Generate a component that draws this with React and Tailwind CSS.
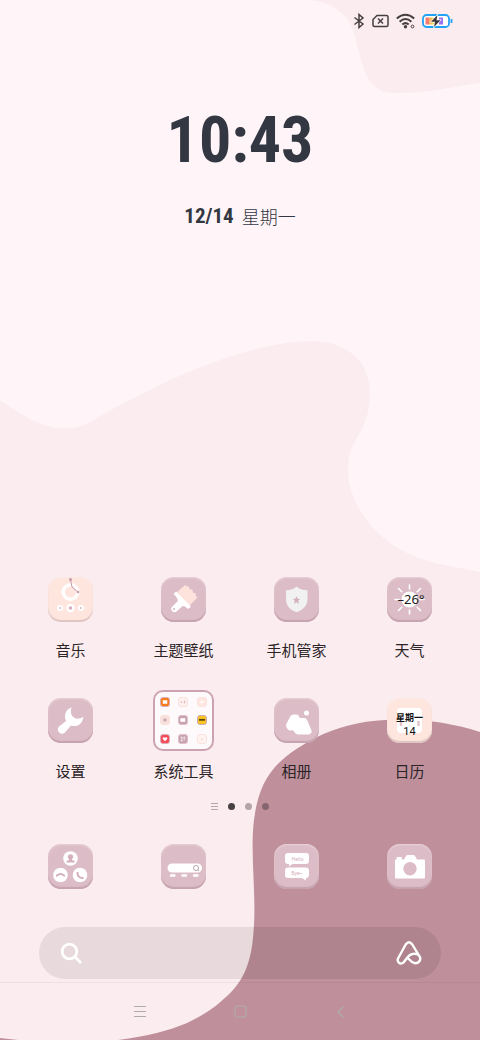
import React from "react";
import clsx from "clsx";

const Wallpaper = () => (
  <svg
    className="absolute inset-0 h-full w-full"
    viewBox="0 0 480 1040"
    preserveAspectRatio="none"
    aria-hidden="true"
  >
    <rect width="480" height="1040" fill="#fff5f8" />
    <path d="M310 0C334 3 346 14 352 27C362 57 362 93 394 93C425 94 450 87 480 83V0Z" fill="#fbecef" />
    <path
      d="M0 400C25 418 45 428.500 65 428.500C80 428.500 88 423 100 416C170 377 250 341 314 341C346 342 370 360 370 394C369 436 348 436 348 470C348 500 370 534 405 552C430 565 460 567 480 572V1040H0Z"
      fill="#fbecef"
    />
    <path
      d="M480 732C450 722 415 718 385 720C360 721 335 728 317 737C298 747 285 756 275 767C262 782 257 798 254 820C250 850 256 892 254 925C253 940 252 950 249 960C246 971 241 981 233 990C220 1004 206 1014 187 1023C168 1031 148 1036 118 1040H480Z"
      fill="#bf909c"
    />
    <path d="M0 1038L18 1040H0Z" fill="#bf909c" />
  </svg>
);

const StatusBar = () => (
  <div className="flex h-[42px] items-center justify-end gap-[7px] pr-[27px] text-[#463f42]">
    <svg width="12" height="16" viewBox="0 0 12 16" fill="none" stroke="currentColor" strokeWidth="1.5">
      <path d="M1.500 4.500L10 11L6 14.500V1.500L10 5L1.500 11.500" />
    </svg>
    <svg width="17" height="14" viewBox="0 0 17 14" fill="none" stroke="currentColor" strokeWidth="1.500">
      <path d="M5 1.500H14.500Q16 1.500 16 3V11Q16 12.500 14.500 12.500H2.500Q1 12.500 1 11V5.500Z" />
      <path d="M6 4.500L11 9.500M11 4.500L6 9.500" />
    </svg>
    <svg width="19" height="16" viewBox="0 0 19 16" fill="none" stroke="currentColor" strokeWidth="2">
      <path d="M.8 5.500Q9.500-2 18.200 5.500M3.600 8.700Q9.500 3.400 15.400 8.700M6.300 11.500Q9.500 8.800 12.700 11.500" />
      <circle cx="9.500" cy="13.700" r="1.700" fill="currentColor" stroke="none" />
      <circle cx="16.500" cy="13.500" r="1.400" strokeWidth="1" />
    </svg>
    <svg width="31" height="16" viewBox="0 0 31 16">
      <rect x="1" y="2" width="26" height="12" rx="3.500" fill="#fff" stroke="#22a2f5" strokeWidth="1.800" />
      <path d="M29.500 6V10" stroke="#22a2f5" strokeWidth="1.800" />
      <rect x="3.500" y="4.500" width="3.500" height="7" fill="#f77b72" />
      <rect x="7" y="4.500" width="3" height="7" fill="#fbb45f" />
      <rect x="10" y="4.500" width="4" height="7" fill="#f3dc62" />
      <rect x="17" y="4.500" width="4" height="7" fill="#9b70ed" />
      <path
        d="M15.500 2L9 8.800H13L12 14L18.500 7.200H14.500Z"
        fill="#3d373b"
        stroke="#fff"
        strokeWidth="1.200"
        paintOrder="stroke"
      />
    </svg>
  </div>
);

const MusicArt = () => (
  <>
    <circle cx="22.500" cy="15" r="7.300" fill="none" stroke="#fff" strokeWidth="3.400" />
    <g fill="#c69aac">
      <circle cx="22.500" cy="2.500" r="1.500" />
      <circle cx="30" cy="15" r="1.300" />
    </g>
    <path d="M22.500 2.500L24 10L30 15" fill="none" stroke="#c69aac" strokeWidth="1" />
    <g fill="#fff">
      <circle cx="12" cy="31" r="3" />
      <circle cx="22.500" cy="31" r="4.200" />
      <circle cx="33" cy="31" r="3" />
    </g>
    <path d="M13 29.700V32.300L10.800 31ZM32 29.700V32.300L34.200 31ZM21 29.500H24V32.500H21Z" fill="#d5b2be" />
  </>
);

const BrushArt = () => (
  <>
    <path d="M15 16L24 8L26 9.500L27.500 9.300L28.500 12L31.500 12.800L32 15.500L35 16.500L34.500 18.500L36.500 20.500L28 29Z" fill="#fde3dc" />
    <path
      fillRule="evenodd"
      d="M15 14.500L30 29.500L27 32Q23 28 21 29.500L15.500 34.500A3.300 3.300 0 0 1 10.800 30L16.500 24.500Q18 22 12.500 17ZM13 31A1.100 1.100 0 1 0 13 33.200A1.100 1.100 0 0 0 13 31Z"
      fill="#fff"
    />
  </>
);

const ShieldArt = () => (
  <>
    <path
      d="M22.500 9.500Q27 13.500 33.500 13.300V22C33.500 29 28.500 33 22.500 35.300C16.500 33 12 29 12 22V13.300Q18 13.500 22.500 9.500Z"
      fill="#f1f1f2"
    />
    <path
      d="M22.500 19L23.700 21.700L26.300 21.900L24.300 23.800L25 26.700L22.500 25.200L20 26.700L20.700 23.800L18.700 21.900L21.300 21.700Z"
      fill="#d7b1bd"
    />
  </>
);

const WeatherArt = () => (
  <>
    <circle cx="22.500" cy="22.500" r="8" fill="#fff" />
    <path
      d="M22.500 8V12M22.500 33V37M8 22.500H12M33 22.500H37M11.500 11.500L14.800 14.800M30.200 30.200L33.500 33.500M11.500 33.500L14.800 30.200M30.200 14.800L33.500 11.500"
      stroke="#fff"
      strokeWidth="1.600"
      strokeLinecap="round"
    />
    <text x="24" y="27" textAnchor="middle" fontSize="13" fill="#222" className="font-['Noto_Sans',sans-serif]">
      –26°
    </text>
  </>
);

const WrenchArt = () => (
  <path
    d="M23.500 9.500C18 11 15.500 17 18 23L11 28.500A4.300 4.300 0 0 0 16.500 35L23 27.500C29 29.500 35 26 35.300 18.500C32.500 21 28.500 21.500 26 19.500C22.500 17 22.500 13 23.500 9.500Z"
    fill="#fff"
  />
);

const PhotosArt = () => (
  <>
    <g fill="#fff" stroke="#fff" strokeWidth="7" strokeLinejoin="round">
      <path d="M19.500 20L22 20L25 28L16.500 29L15.500 27.500Z" />
      <path d="M26 23.500L30 23.500L34 33H24L21 29Z" />
    </g>
    <circle cx="32.500" cy="15" r="2.500" fill="#fff" />
  </>
);

const CalendarArt = () => (
  <>
    <rect x="10" y="10" width="25" height="25" rx="4" fill="#fff" />
    <path d="M14 23V28M31.500 23V28" stroke="#e5c3cb" strokeWidth="2.500" />
    <text
      x="22.500"
      y="23"
      textAnchor="middle"
      fontSize="9"
      fontWeight="700"
      fill="#111"
      className="font-['Noto_Sans_CJK_SC',sans-serif]"
    >
      星期一
    </text>
    <text x="22.500" y="37" textAnchor="middle" fontSize="11" fill="#111" className="font-['Roboto',sans-serif]">
      14
    </text>
  </>
);

const PhoneArt = () => (
  <>
    <g fill="#fff">
      <circle cx="22.500" cy="14.500" r="7.300" />
      <circle cx="12.500" cy="31" r="7.300" />
      <circle cx="32" cy="31" r="7.300" />
    </g>
    <path
      d="M22.500 10.300A2.600 2.600 0 0 0 21 15.100V16L18.500 17V18.500H26.500V17L24 16V15.100A2.600 2.600 0 0 0 22.500 10.300Z"
      fill="#d5b0bc"
    />
    <path d="M9 32.500V31.500Q12.500 28.500 16 31.500V32.500M29.500 28V29.500Q30 33.500 34 34H35.500" fill="none" stroke="#d5b0bc" strokeWidth="2" />
  </>
);

const BrowserArt = () => (
  <>
    <rect x="6.500" y="19.500" width="34.500" height="9" rx="4.500" fill="#fff" />
    <circle cx="35" cy="24" r="2.500" fill="none" stroke="#b9a4ab" strokeWidth="1" />
    <path d="M37 26L38 27" stroke="#b9a4ab" strokeWidth="1" />
    <path d="M10 31.500H13.500M21.500 31.500H25M33 31.500H36.500" stroke="#fff" strokeWidth="2.400" strokeLinecap="round" />
  </>
);

const MessagesArt = () => (
  <>
    <path
      d="M14 9H32Q35 9 35 12V17Q35 20 32 20H18.500L15 22.500V20H14Q11 20 11 17V12Q11 9 14 9ZM14 23.500H32Q35 23.500 35 26.500V31Q35 34 32 34V36.500L28 34H14Q11 34 11 31V26.500Q11 23.500 14 23.500Z"
      fill="#fff"
    />
    <g fill="#d3aab7" fontSize="5" textAnchor="middle" className="font-['Noto_Sans',sans-serif]">
      <text x="23.500" y="16.500">Hello</text>
      <text x="23" y="30.500">Bye~</text>
    </g>
  </>
);

const CameraArt = () => (
  <path
    fillRule="evenodd"
    d="M9.500 15.500V14Q9.500 13 10.500 13H14Q15 13 15 14V15.500H17L19 12Q19.500 11 21 11H26Q27.500 11 28 12L30 15.500H37Q38 15.500 38 16.500V33.500Q38 34.500 37 34.500H9Q8 34.500 8 33.500V16.500Q8 15.500 9 15.500ZM23 18A6.700 6.700 0 1 0 23 31.400A6.700 6.700 0 0 0 23 18Z"
    fill="#fff"
  />
);

const minis = [
  { bg: "bg-[#f97c1c]", edge: "border-[#d5aebb]", d: "M2 2.500H7V6.500H2Z", fg: "#fff" },
  { bg: "bg-[#fff1ee]", edge: "border-[#fbe0dc]", d: "M2 4H3.500V5.500H2ZM5.500 3H7V6H5.500Z", fg: "#d9b9c3" },
  { bg: "bg-[#ffe7e1]", edge: "border-[#fbe2dd]", d: "M2 2.500L7.500 4.500L2 6.500L3.500 4.500Z", fg: "#fff" },
  { bg: "bg-[#f8e2de]", edge: "border-[#fae1dc]", d: "M4.500 2L7 4.500L4.500 7L2 4.500Z", fg: "#d0adb8" },
  { bg: "bg-[#c9a2b1]", edge: "border-[#dcbfc9]", d: "M1.500 2.500H7V6.500H1.500Z", fg: "#fff" },
  { bg: "bg-[#fbc51e]", edge: "border-[#cdaab8]", d: "M1 3.300H8V5.300H1Z", fg: "#5b4310" },
  { bg: "bg-[#f64c57]", edge: "border-[#d9aebb]", d: "M4.500 7L1.800 4.200Q2.200 1.800 4.500 3Q6.800 1.800 7.200 4.200Z", fg: "#fff" },
  { bg: "bg-[#c9a2b1]", edge: "border-[#dcbfc9]", d: "M2 2H4V4H2ZM5 2H7V4H5ZM2 5H4V7H2ZM5 5H7V6H5Z", fg: "#f7eaee" },
  { bg: "bg-[#fff4f1]", edge: "border-[#fce1dc]", d: "M3.500 4H5.500V5.500H3.500Z", fg: "#f8d6ce" },
];

const Folder = () => (
  <span className="grid h-[61px] w-[61px] grid-cols-3 place-items-center rounded-[10px] border-2 border-[#cda3b2] bg-[#fef9fb] p-px">
    {minis.map((m, i) => (
      <span key={i} className={clsx("h-[10px] w-[10px] rounded-[3px] border", m.bg, m.edge)}>
        <svg className="block h-full w-full" viewBox="0 0 9 9">
          <path d={m.d} fill={m.fg} />
        </svg>
      </span>
    ))}
  </span>
);

const Tile = ({ art: Art, peach }) => (
  <span
    className={clsx(
      "block h-[45px] w-[45px] rounded-[13px]",
      peach
        ? "bg-[#fee6df] shadow-[inset_0_-2px_1px_#dfc5c2,inset_0_1px_1px_#fbe9e5]"
        : "bg-[#dcbcc6] shadow-[inset_0_-2px_1px_#c5a3af,inset_0_1px_2px_#ead3da]"
    )}
  >
    <svg className="block h-full w-full" viewBox="0 0 45 45">
      <Art />
    </svg>
  </span>
);

const apps = [
  { label: "音乐", art: MusicArt, peach: true },
  { label: "主题壁纸", art: BrushArt },
  { label: "手机管家", art: ShieldArt },
  { label: "天气", art: WeatherArt },
  { label: "设置", art: WrenchArt },
  { label: "系统工具", folder: true },
  { label: "相册", art: PhotosArt },
  { label: "日历", art: CalendarArt, peach: true },
];

const dock = [
  { label: "电话", art: PhoneArt },
  { label: "浏览器", art: BrowserArt },
  { label: "短信", art: MessagesArt },
  { label: "相机", art: CameraArt },
];

const App = () => {
  return (
    <div className="relative isolate flex min-h-screen flex-col overflow-hidden font-['Noto_Sans','Noto_Sans_CJK_SC',sans-serif]">
      <div className="absolute inset-0 -z-10">
        <Wallpaper />
      </div>

      <StatusBar />

      <header className="mt-[66px] flex flex-col items-center text-[#333741]">
        <h1 className="font-['Roboto_Condensed','Liberation_Serif',serif] text-[64px] leading-[66px] font-bold">
          10:43
        </h1>
        <p className="mt-7 flex items-center gap-2 leading-7">
          <span className="font-['Roboto_Condensed','Liberation_Serif',serif] text-[21px] font-bold">
            12/14
          </span>
          <span className="font-['Noto_Sans_CJK_SC',sans-serif] text-[18px] font-light">星期一</span>
        </p>
      </header>

      <main className="mt-auto grid grid-cols-4 gap-y-[30px] px-3.5 pt-10">
        {apps.map((app) => (
          <button key={app.label} type="button" className="flex flex-col items-center gap-2.5">
            <span className="flex h-[61px] items-center">
              {app.folder ? <Folder /> : <Tile art={app.art} peach={app.peach} />}
            </span>
            <span className="font-['Noto_Sans_CJK_SC',sans-serif] text-[15px] leading-5 text-[#2a2427]">
              {app.label}
            </span>
          </button>
        ))}
      </main>

      <div className="mt-[19px] flex h-3 items-center justify-center gap-2.5">
        <svg width="7" height="7" viewBox="0 0 7 7" stroke="#b5a8ac" strokeWidth="1">
          <path d="M0 .5H7M0 3.500H7M0 6.500H7" />
        </svg>
        <span className="h-[7px] w-[7px] rounded-full bg-[#474044]" />
        <span className="h-[7px] w-[7px] rounded-full bg-[#b3a5aa]" />
        <span className="h-[7px] w-[7px] rounded-full bg-[#856670]" />
      </div>

      <nav className="mt-8 grid grid-cols-4 px-3.5">
        {dock.map((app) => (
          <button key={app.label} type="button" aria-label={app.label} className="flex justify-center">
            <Tile art={app.art} />
          </button>
        ))}
      </nav>

      <form className="mx-[39px] mt-[38px] flex h-[52px] items-center rounded-full bg-black/8 pr-[19px] pl-[21px] text-white">
        <svg width="23" height="23" viewBox="0 0 23 23" fill="none" stroke="currentColor" strokeWidth="2.800">
          <circle cx="9.500" cy="9.500" r="7.300" />
          <path d="M15 15L21 21" />
        </svg>
        <input type="text" aria-label="搜索" className="h-full min-w-0 flex-1 bg-transparent px-3 outline-none" />
        <button type="button" aria-label="小爱同学">
          <svg
            width="26"
            height="24"
            viewBox="0 0 26 24"
            fill="none"
            stroke="currentColor"
            strokeWidth="2.400"
            strokeLinecap="round"
            strokeLinejoin="round"
          >
            <path d="M23 14.500L16.300 3.500Q13 -1 9.700 3.500L2 17.500C.5 21.500 5 24 7.500 21.500L11 17C14 12.500 20 11.500 23 14.500C26 18.500 23 22.500 19 22.300C15.500 22 14.500 19.500 11.500 16.500" />
          </svg>
        </button>
      </form>

      <footer className="mt-[3px] flex h-[58px] items-center justify-center gap-[88px] border-t border-black/5 text-[#b0aaab]">
        <button type="button" aria-label="最近任务">
          <svg width="12" height="12" viewBox="0 0 12 12" stroke="currentColor" strokeWidth="1">
            <path d="M0 .5H12M0 5.500H12M0 10.500H12" />
          </svg>
        </button>
        <button type="button" aria-label="主屏幕">
          <svg width="13" height="13" viewBox="0 0 13 13" fill="none" stroke="currentColor" strokeWidth="1.200">
            <rect x="1" y="1" width="11" height="11" rx="2" />
          </svg>
        </button>
        <button type="button" aria-label="返回">
          <svg width="12" height="12" viewBox="0 0 12 12" fill="none" stroke="currentColor" strokeWidth="1.200">
            <path d="M8.500 .5L3 6L8.500 11.500" />
          </svg>
        </button>
      </footer>
    </div>
  );
};

export default App;
